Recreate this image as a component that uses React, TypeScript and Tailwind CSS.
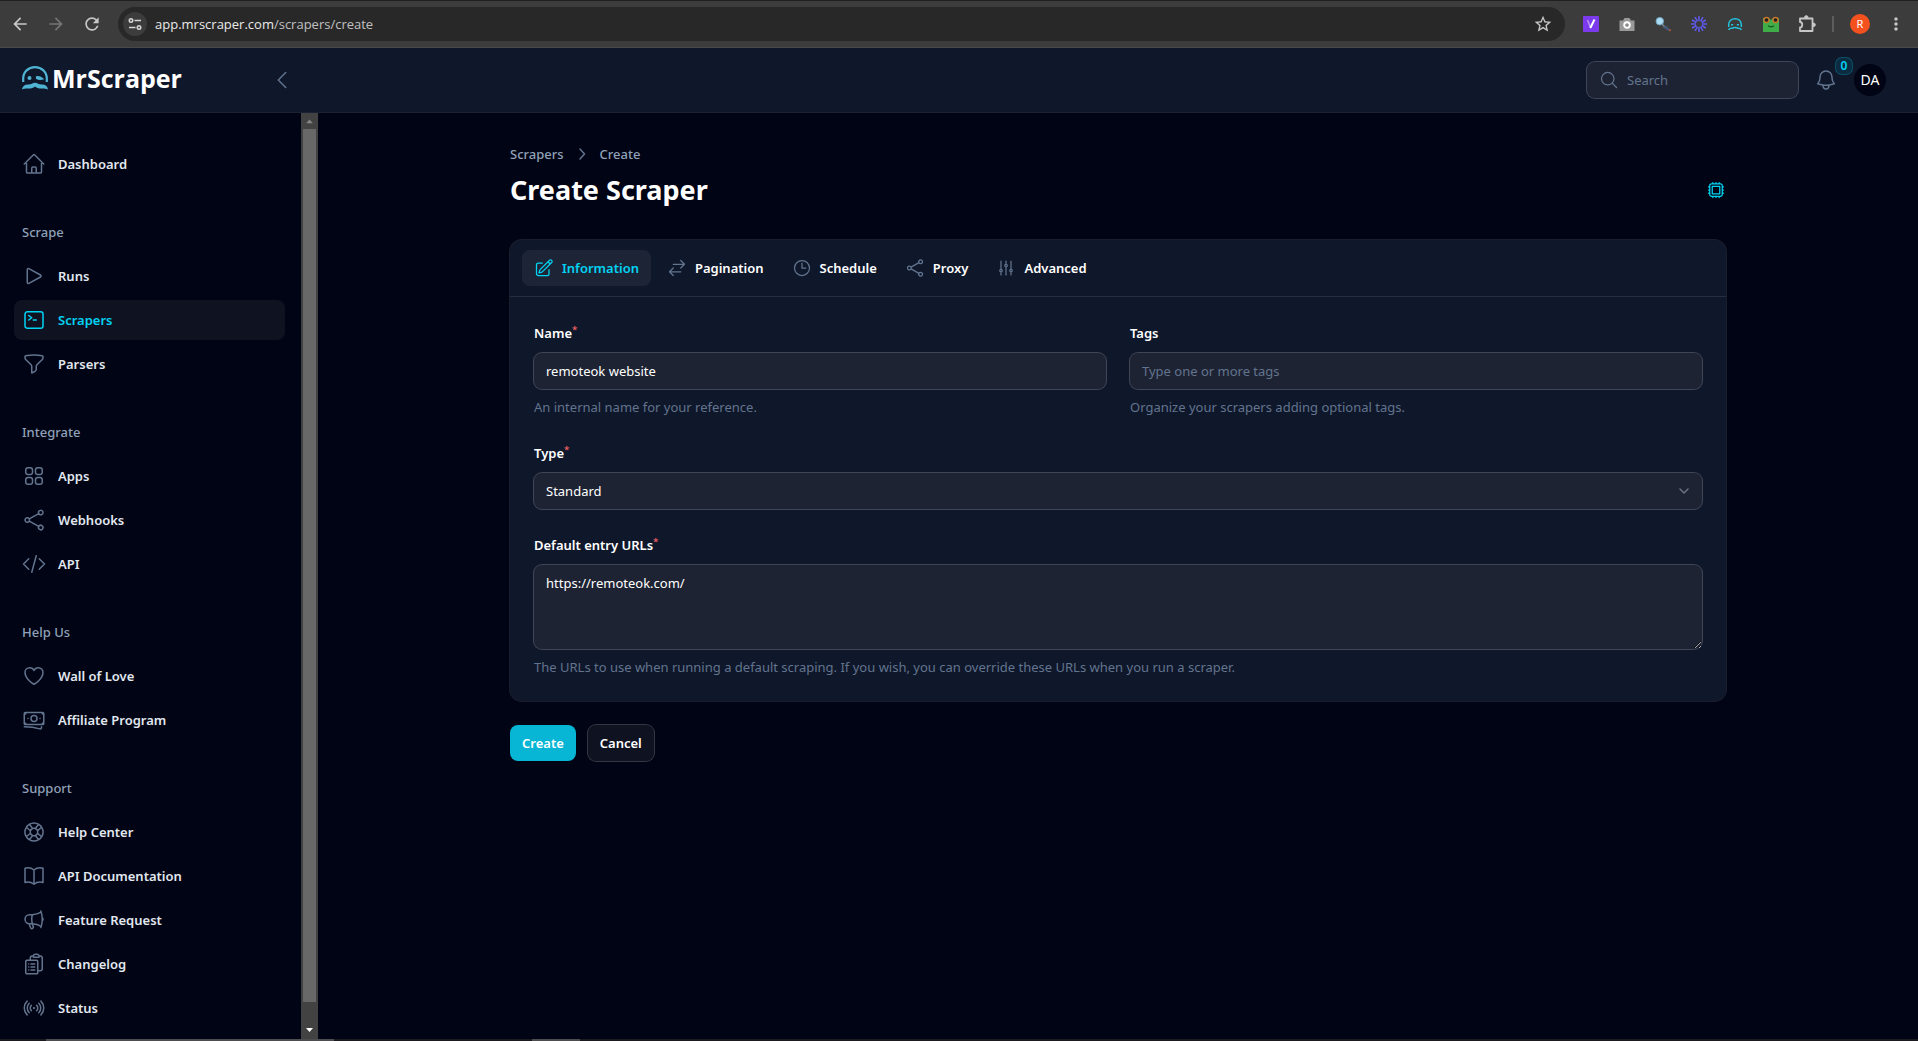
import { useState, type ReactNode } from "react";
import type { IconType } from "react-icons";
import {
  HiOutlineAdjustmentsVertical,
  HiOutlineArrowsRightLeft,
  HiOutlineBanknotes,
  HiOutlineBell,
  HiOutlineBookOpen,
  HiOutlineChevronLeft,
  HiOutlineClipboardDocumentList,
  HiOutlineClock,
  HiOutlineCodeBracket,
  HiOutlineCommandLine,
  HiOutlineCpuChip,
  HiOutlineFunnel,
  HiOutlineHeart,
  HiOutlineHome,
  HiOutlineLifebuoy,
  HiOutlineMagnifyingGlass,
  HiOutlineMegaphone,
  HiOutlinePencilSquare,
  HiOutlinePlay,
  HiOutlineShare,
  HiOutlineSignal,
  HiOutlineSquares2X2,
} from "react-icons/hi2";
import { MdArrowBack, MdArrowForward, MdMoreVert, MdRefresh, MdStarBorder } from "react-icons/md";

type NavItem = { label: string; icon: IconType; active?: boolean };
type NavGroup = { title?: string; items: NavItem[] };

const navigation: NavGroup[] = [
  { items: [{ label: "Dashboard", icon: HiOutlineHome }] },
  {
    title: "Scrape",
    items: [
      { label: "Runs", icon: HiOutlinePlay },
      { label: "Scrapers", icon: HiOutlineCommandLine, active: true },
      { label: "Parsers", icon: HiOutlineFunnel },
    ],
  },
  {
    title: "Integrate",
    items: [
      { label: "Apps", icon: HiOutlineSquares2X2 },
      { label: "Webhooks", icon: HiOutlineShare },
      { label: "API", icon: HiOutlineCodeBracket },
    ],
  },
  {
    title: "Help Us",
    items: [
      { label: "Wall of Love", icon: HiOutlineHeart },
      { label: "Affiliate Program", icon: HiOutlineBanknotes },
    ],
  },
  {
    title: "Support",
    items: [
      { label: "Help Center", icon: HiOutlineLifebuoy },
      { label: "API Documentation", icon: HiOutlineBookOpen },
      { label: "Feature Request", icon: HiOutlineMegaphone },
      { label: "Changelog", icon: HiOutlineClipboardDocumentList },
      { label: "Status", icon: HiOutlineSignal },
    ],
  },
];

const tabs: NavItem[] = [
  { label: "Information", icon: HiOutlinePencilSquare },
  { label: "Pagination", icon: HiOutlineArrowsRightLeft },
  { label: "Schedule", icon: HiOutlineClock },
  { label: "Proxy", icon: HiOutlineShare },
  { label: "Advanced", icon: HiOutlineAdjustmentsVertical },
];

const inputClass =
  "block w-full rounded-lg bg-[#1e2333] px-3 text-white outline-none ring-1 ring-white/20 placeholder:text-slate-500";

function Face({ className }: { className?: string }) {
  return (
    <svg viewBox="0 0 26 24" fill="none" stroke="currentColor" className={className}>
      <path d="M1.2 16V12.5C1.2 6 6.3 1.2 13 1.2S24.8 6 24.8 12.5V16" strokeWidth="2.2" />
      <circle cx="7.5" cy="12" r="2" fill="currentColor" stroke="none" />
      <path d="M14.500 10.800q3.500-.6 6.500 2.200q-3.500 1-6.500-.6z" strokeWidth="1.200" fill="currentColor" />
      <path
        d="M0 23.500c.5-3.600 3-5.200 6.500-5 2.600 0 4.200-1.800 6.500-1.800s3.900 1.800 6.500 1.800c3.500-.2 6 1.400 6.500 5-2.500-1.200-4.600-1-7-1-2.600 0-4.200-.8-6-2.100-1.800 1.300-3.400 2.100-6 2.100-2.400 0-4.500-.2-7 1z"
        fill="currentColor"
        stroke="none"
      />
    </svg>
  );
}

function SadFace({ className }: { className?: string }) {
  return (
    <svg viewBox="0 0 16 16" fill="none" stroke="currentColor" className={className}>
      <path d="M1.700 11V9C1.700 5 4.400 2.700 8 2.700S14.300 5 14.300 9v2" strokeWidth="1.500" />
      <path d="M4 8.800h2.200M9.800 8.800H12" strokeWidth="1.400" />
      <path d="M1.500 13.800c1-1.800 2.300-1.500 3.700-1.600 1.100-.1 1.700-.8 2.800-.8s1.700.7 2.800.8c1.400.1 2.700-.2 3.700 1.600" strokeWidth="1.500" />
    </svg>
  );
}

function Extensions() {
  return (
    <div className="flex items-center gap-5">
      <svg viewBox="0 0 16 16" className="size-4">
        <rect width="16" height="16" rx="1" fill="#7c3aed" />
        <path d="M4.500 4l3 7.500" fill="none" stroke="#b794f6" strokeWidth="1.500" />
        <path d="M7.300 12L11.500 3.500" fill="none" stroke="#fff" strokeWidth="2" />
      </svg>
      <svg viewBox="0 0 16 16" className="size-4">
        <path d="M.500 4.500h3.500l1.500-2.500h5l1.500 2.500h3.500v10.500h-15z" fill="#999" />
        <circle cx="8" cy="9" r="2.800" fill="#8a8a8a" stroke="#fff" strokeWidth="1.900" />
      </svg>
      <svg viewBox="0 0 16 16" className="size-4">
        <path d="M7 8l3 3" stroke="#7b8794" strokeWidth="1.500" />
        <circle cx="4.800" cy="5.200" r="3.800" fill="#a9dcf5" stroke="#6f9db8" />
        <path d="M7.500 11.500l4-2 1.500 2L15.500 14l-3 .5-2-1.500z" fill="#46597a" />
        <path d="M14 14.500l2-.5" stroke="#c0562f" strokeWidth="1.500" />
      </svg>
      <svg viewBox="0 0 16 16" className="size-4" stroke="#5f5af2" strokeWidth="1.500" fill="none">
        <path d="M8 0v5M8 11v5M0 8h5M11 8h5M4 1.100l2.500 4.300M9.500 10.600l2.500 4.300M12 1.100L9.500 5.400M6.500 10.600L4 14.900M1.100 4l4.300 2.500M10.600 9.500l4.300 2.500M1.100 12l4.300-2.500M10.600 6.500L14.900 4" />
      </svg>
      <SadFace className="size-4 text-[#22c3dd]" />
      <svg viewBox="0 0 16 16" className="size-4">
        <path d="M0 2h6l2 2 2-2h6v14H0z" fill="#3fae49" />
        <circle cx="3.500" cy="4" r="3.200" fill="#c9762b" />
        <circle cx="12.500" cy="4" r="3.200" fill="#c9762b" />
        <circle cx="3.500" cy="4" r="1.800" fill="#1d1d1d" />
        <circle cx="12.500" cy="4" r="1.800" fill="#1d1d1d" />
        <path d="M5 9.800q3 2 6 0" stroke="#174d1d" strokeWidth="1.200" fill="none" />
      </svg>
      <svg viewBox="0 0 18 18" className="-mx-px size-[18px]" fill="none" stroke="#c7c7c7" strokeWidth="1.800" strokeLinejoin="round">
        <path d="M2 3.500h12.500v12.500H2v-3.500c3 0 3-5.500 0-5.500z" />
        <path d="M6.500 2.500a1.800 1.800 0 0 1 3.600 0zM15.500 8a1.800 1.800 0 0 1 0 3.600z" fill="#c7c7c7" strokeWidth="1" />
      </svg>
    </div>
  );
}

function BrowserBar() {
  return (
    <div className="flex h-12 shrink-0 items-center border-t border-[#202020] border-b border-b-[#4a4a4a] bg-[#3c3c3c] pr-3 pl-2.5 text-[#c7c7c7]">
      <div className="flex items-center gap-4">
        <button aria-label="Back"><MdArrowBack className="size-5" /></button>
        <button aria-label="Forward" className="text-[#757575]"><MdArrowForward className="size-5" /></button>
        <button aria-label="Reload"><MdRefresh className="size-5" /></button>
      </div>
      <div className="ml-4 flex h-[34px] flex-1 items-center rounded-full bg-[#282828] pr-3 pl-[5px]">
        <span className="flex size-6 items-center justify-center rounded-full bg-[#3c3c3c]">
          <svg viewBox="0 0 14 12" className="h-3 w-3.5" fill="none" stroke="#d5d5d5" strokeWidth="1.600">
            <circle cx="3" cy="2.500" r="1.700" />
            <path d="M6.500 2.500H13M1 9.500h6.500" />
            <circle cx="11" cy="9.500" r="1.700" />
          </svg>
        </span>
        <p className="ml-2 flex-1 font-['Open_Sans',sans-serif] text-[#c0c0c0]">
          <span className="text-[#eaeaea]">app.mrscraper.com</span>/scrapers/create
        </p>
        <button aria-label="Bookmark this tab"><MdStarBorder className="size-5" /></button>
      </div>
      <div className="ml-[18px] flex items-center">
        <Extensions />
        <span className="ml-[17px] h-4 w-0.5 bg-[#5c5c5c]" />
        <span className="ml-4 flex size-5 items-center justify-center rounded-full bg-[#f4511e] text-[11px] text-white">R</span>
        <button aria-label="Menu" className="ml-4"><MdMoreVert className="size-5" /></button>
      </div>
    </div>
  );
}

function Header() {
  return (
    <header className="flex h-[65px] shrink-0 items-center border-b border-[#1a2133] bg-[#0f172a] pr-8 pl-[22px]">
      <div className="flex w-[248px] items-center">
        <a href="#" className="flex items-center gap-1 pb-1 font-['Open_Sans',sans-serif] text-[25px] leading-8 font-bold text-white">
          <Face className="h-6 w-[26px] text-[#4fb3d4]" />
          MrScraper
        </a>
      </div>
      <button aria-label="Collapse sidebar" className="text-slate-500">
        <HiOutlineChevronLeft className="size-6" />
      </button>
      <div className="ml-auto flex items-center gap-4">
        <label className="flex h-9 w-[211px] items-center rounded-lg bg-[#1e2333] pl-3 ring-1 ring-white/20">
          <HiOutlineMagnifyingGlass className="size-5 shrink-0 text-slate-500" />
          <input
            type="search"
            aria-label="Search"
            placeholder="Search"
            className="w-full px-2 text-white outline-none placeholder:text-slate-500"
          />
        </label>
        <button aria-label="Notifications" className="relative text-slate-500">
          <HiOutlineBell className="size-6" />
          <span className="absolute -top-2.5 left-[22px] flex size-4 items-center justify-center rounded-md bg-[#0b2b40] text-xs font-semibold text-cyan-400 ring-1 ring-cyan-400/30">
            0
          </span>
        </button>
        <button className="flex size-8 items-center justify-center rounded-full bg-[#010414] text-sm text-white">DA</button>
      </div>
    </header>
  );
}

function Sidebar() {
  return (
    <aside className="flex w-[318px] shrink-0">
      <nav className="flex flex-1 flex-col gap-7 overflow-hidden pt-[31px] pr-4 pl-3.5">
        {navigation.map((group) => (
          <div key={group.title ?? "main"} className="flex flex-col gap-1">
            {group.title && <p className="px-2 py-2 leading-6 font-medium text-slate-400">{group.title}</p>}
            {group.items.map(({ label, icon: Icon, active }) => (
              <a
                key={label}
                href="#"
                className={
                  active
                    ? "flex h-10 shrink-0 items-center gap-3 rounded-lg bg-white/6 px-2 font-semibold text-cyan-400"
                    : "flex h-10 shrink-0 items-center gap-3 rounded-lg px-2 font-semibold text-slate-200"
                }
              >
                <Icon className={active ? "size-6" : "size-6 text-slate-500"} />
                {label}
              </a>
            ))}
          </div>
        ))}
      </nav>
      {/* scrollbar */}
      <div className="flex w-[17px] flex-col items-center bg-[#424242]">
        <svg viewBox="0 0 17 17" className="h-4 w-[17px]"><path d="M5 11h7L8.500 7z" fill="#868686" /></svg>
        <div className="w-[13px] flex-1 bg-[#686868]" />
        <div className="h-5" />
        <svg viewBox="0 0 17 17" className="size-[17px]"><path d="M5 6h7L8.500 10z" fill="#fff" /></svg>
      </div>
    </aside>
  );
}

function Field(props: { id: string; label: string; required?: boolean; hint?: string; children: ReactNode }) {
  return (
    <div className="flex flex-col gap-2">
      <label htmlFor={props.id} className="leading-6 font-semibold text-white">
        {props.label}
        {props.required && <sup className="font-medium text-red-400">*</sup>}
      </label>
      {props.children}
      {props.hint && <p className="leading-5 text-slate-500">{props.hint}</p>}
    </div>
  );
}

function CreateForm() {
  const [tab, setTab] = useState("Information");

  return (
    <form className="flex flex-col gap-6" onSubmit={(e) => e.preventDefault()}>
      <div className="rounded-xl bg-[#0f172a] ring-1 ring-white/10">
        <div className="flex gap-1 border-b border-white/10 px-3 py-2.5">
          {tabs.map(({ label, icon: Icon }) => (
            <button
              key={label}
              type="button"
              onClick={() => setTab(label)}
              className={
                tab === label
                  ? "flex h-9 items-center gap-2 rounded-lg bg-white/6 px-3 font-semibold text-cyan-400"
                  : "flex h-9 items-center gap-2 rounded-lg px-3 font-semibold text-white"
              }
            >
              <Icon className={tab === label ? "size-5" : "size-5 text-slate-500"} />
              {label}
            </button>
          ))}
        </div>

        <div className="grid grid-cols-2 gap-6 p-6">
          <Field id="name" label="Name" required hint="An internal name for your reference.">
            <input id="name" type="text" defaultValue="remoteok website" className={`${inputClass} h-9`} />
          </Field>
          <Field id="tags" label="Tags" hint="Organize your scrapers adding optional tags.">
            <input id="tags" type="text" placeholder="Type one or more tags" className={`${inputClass} h-9`} />
          </Field>
          <div className="col-span-2">
            <Field id="type" label="Type" required>
              <div className="relative">
                <select id="type" className={`${inputClass} h-9 appearance-none`}>
                  <option>Standard</option>
                </select>
                <svg
                  viewBox="0 0 20 20"
                  className="pointer-events-none absolute top-2 right-2 size-5 text-[#6b7280]"
                  fill="none"
                  stroke="currentColor"
                  strokeWidth="1.500"
                  strokeLinecap="round"
                  strokeLinejoin="round"
                >
                  <path d="M6 8l4 4 4-4" />
                </svg>
              </div>
            </Field>
          </div>
          <div className="col-span-2">
            <Field
              id="urls"
              label="Default entry URLs"
              required
              hint="The URLs to use when running a default scraping. If you wish, you can override these URLs when you run a scraper."
            >
              <textarea
                id="urls"
                defaultValue="https://remoteok.com/"
                className={`${inputClass} h-[84px] resize-y py-1.5 leading-6`}
              />
            </Field>
          </div>
        </div>
      </div>

      <div className="flex gap-3">
        <button type="submit" className="h-9 rounded-lg bg-[#06b6d4] px-3 font-semibold text-white">Create</button>
        <button type="button" className="h-9 rounded-lg bg-white/6 px-3 font-semibold text-white ring-1 ring-white/20">
          Cancel
        </button>
      </div>
    </form>
  );
}

export default function App() {
  return (
    <div className="flex h-screen flex-col overflow-hidden bg-[#010414] font-['Noto_Sans','Open_Sans',sans-serif] text-[13px] leading-5">
      <BrowserBar />
      <Header />
      <div className="flex min-h-0 flex-1">
        <Sidebar />
        <main className="flex-1 overflow-hidden">
          <div className="mx-auto flex max-w-7xl flex-col gap-8 px-8 pt-[31px]">
            <div className="flex items-center justify-between">
              <div>
                <nav aria-label="Breadcrumb" className="flex items-center gap-2 font-medium text-slate-400">
                  <a href="#">Scrapers</a>
                  <svg
                    viewBox="0 0 20 20"
                    className="size-5 text-slate-500"
                    fill="none"
                    stroke="currentColor"
                    strokeWidth="1.500"
                    strokeLinecap="round"
                    strokeLinejoin="round"
                  >
                    <path d="M8 5l4.500 5L8 15" />
                  </svg>
                  <a href="#">Create</a>
                </nav>
                <h1 className="mt-2 text-[27px] leading-9 font-bold text-white">Create Scraper</h1>
              </div>
              <button aria-label="System" className="mt-7 text-cyan-400">
                <HiOutlineCpuChip className="size-5" />
              </button>
            </div>
            <CreateForm />
          </div>
        </main>
      </div>
      {/* top edge of the taskbar */}
      <div className="flex h-0.5 shrink-0 bg-[#1b1b1f]">
        <span className="ml-[46px] w-72 bg-[#4d4d50]" />
        <span className="ml-[198px] w-12 bg-[#4d4d50]" />
      </div>
    </div>
  );
}
